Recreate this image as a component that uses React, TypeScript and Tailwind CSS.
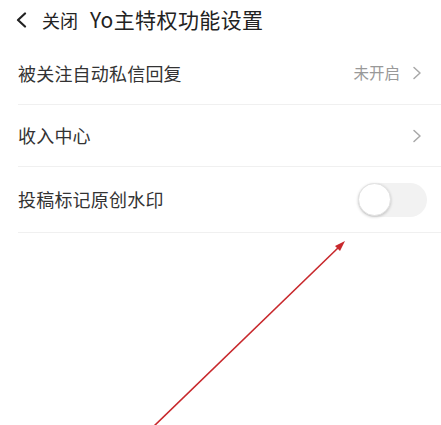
const font = { fontFamily: '"Noto Sans CJK SC", "Noto Sans", sans-serif' }

function Chevron() {
  return (
    <svg width="10" height="14" viewBox="0 0 10 14" fill="none">
      <polyline points="2,1.5 8,7 2,12.5" stroke="#a8a8a8" strokeWidth="1.5" strokeLinecap="round" strokeLinejoin="round" />
    </svg>
  )
}

function Row({ label, children, className }: { label: string; children?: React.ReactNode; className: string }) {
  return (
    <div className={`flex items-center justify-between border-b border-[#f0f0f0] pr-[19px] ${className}`}>
      <span className="text-[18px] tracking-[0.2px] text-[#333]">{label}</span>
      {children}
    </div>
  )
}

export default function App() {
  return (
    <div className="relative w-[441px] h-[425px] bg-white overflow-hidden" style={font}>
      <div className="flex items-center h-[42px] pl-[15px] pb-[2px] text-[#222]">
        <svg width="13" height="16" viewBox="0 0 13 16" fill="none">
          <polyline points="10,1.5 3,8 10,14.5" stroke="#222" strokeWidth="2.2" strokeLinecap="round" strokeLinejoin="round" />
        </svg>
        <span className="ml-[14px] text-[18px]">关闭</span>
        <span className="ml-[12px] text-[21px] tracking-[0.4px]">Yo主特权功能设置</span>
      </div>
      <div className="pl-[18px]">
        <Row label="被关注自动私信回复" className="h-[63px]">
          <div className="flex items-center">
            <span className="text-[15.5px] text-[#999]">未开启</span>
            <span className="ml-[12px]"><Chevron /></span>
          </div>
        </Row>
        <Row label="收入中心" className="h-[62px]">
          <Chevron />
        </Row>
        <Row label="投稿标记原创水印" className="h-[66px] !pr-[14px]">
          <div className="w-[69px] h-[34px] rounded-full bg-[#f2f2f2] flex items-center">
            <div className="size-[33px] rounded-full bg-white border border-[#e2e2e2] shadow-[0_1px_3px_rgba(0,0,0,0.2)]" />
          </div>
        </Row>
      </div>
      <svg className="absolute left-0 top-0" width="441" height="425" viewBox="0 0 441 425">
        <line x1="152" y1="428" x2="340" y2="246" stroke="#c8282c" strokeWidth="1.6" />
        <polygon points="345,241 335,246 340,251" fill="#c8282c" />
      </svg>
    </div>
  )
}
